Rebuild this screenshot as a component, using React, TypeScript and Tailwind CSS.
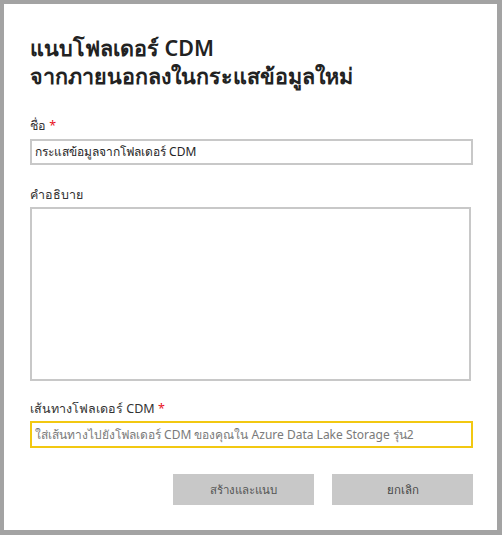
import React from 'react';

const font = { fontFamily: '"Noto Sans", "Open Sans", sans-serif' };

export default function App() {
  return (
    <div className="w-[502px] h-[535px] bg-[#a3a3a3] pt-[4px] pl-[4px] pr-[5px] pb-[5px]" style={font}>
      <div className="h-full bg-white pl-[26px] pr-[24px] pt-[30px] flex flex-col">
        <h1 className="text-[21.5px] leading-[28px] font-semibold text-[#222]">
          แนบโฟลเดอร์ CDM
          <br />
          จากภายนอกลงในกระแสข้อมูลใหม่
        </h1>

        <label className="mt-[28px] text-[12.5px] leading-[16px] text-[#333]">
          ชื่อ <span className="text-[#e81123]">*</span>
        </label>
        <div className="mt-[5px] h-[26px] border-2 border-[#c8c8c8] flex items-center px-[3px] text-[12px] text-[#252525] whitespace-nowrap">
          กระแสข้อมูลจากโฟลเดอร์ CDM
        </div>

        <label className="mt-[22px] text-[12.5px] leading-[16px] text-[#333]">คำอธิบาย</label>
        <div className="mt-[4px] h-[174px] mr-[2px] border-2 border-[#c8c8c8]" />

        <label className="mt-[20px] text-[12.5px] leading-[16px] text-[#333]">
          เส้นทางโฟลเดอร์ CDM <span className="text-[#e81123]">*</span>
        </label>
        <div className="mt-[4px] h-[27px] border-2 border-[#f2c811] flex items-center px-[3px] text-[12px] text-[#7a7a7a] whitespace-nowrap overflow-hidden">
          ใส่เส้นทางไปยังโฟลเดอร์ CDM ของคุณใน Azure Data Lake Storage รุ่น2
        </div>

        <div className="mt-[26px] flex justify-end gap-[18px]">
          <button className="w-[141px] h-[31px] bg-[#c8c8c8] text-[11.5px] text-[#555]">สร้างและแนบ</button>
          <button className="w-[141px] h-[31px] bg-[#c8c8c8] text-[11.5px] text-[#444]">ยกเลิก</button>
        </div>
      </div>
    </div>
  );
}
